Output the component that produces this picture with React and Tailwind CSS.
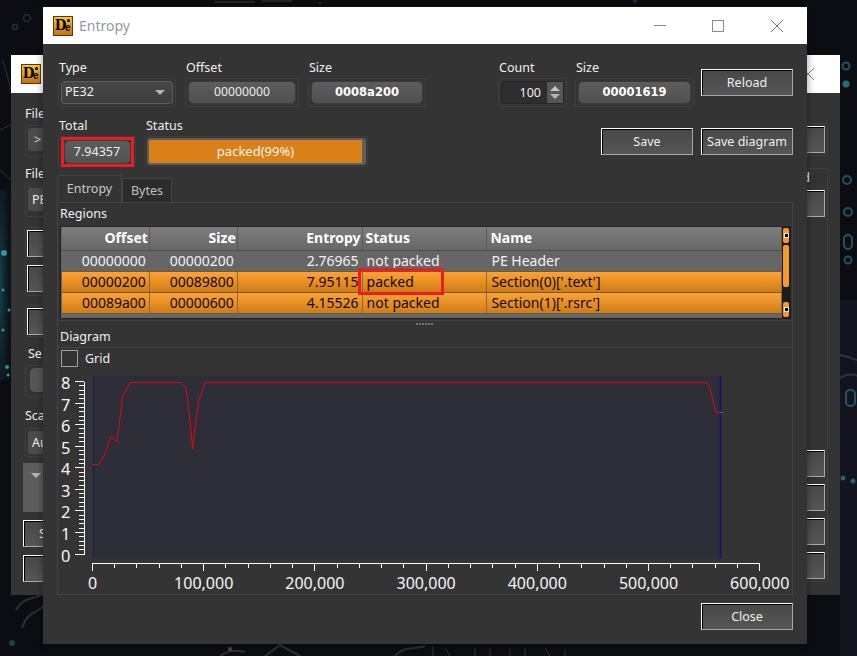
import React from "react";

const Logo = ({ className = "" }) => (
  <div className={`relative w-5 h-5 border border-[#5a3a08] bg-gradient-to-b from-[#f7c62c] to-[#c8700f] overflow-hidden shrink-0 ${className}`}>
    <span className="absolute left-[1px] top-[-2px] font-['Liberation_Serif',serif] font-bold text-[16px] leading-[20px] text-black">D</span>
    <span className="absolute left-[11px] top-[5px] font-['Liberation_Sans',sans-serif] font-bold text-[10px] leading-[12px] text-black">e</span>
    <span className="absolute left-[13px] top-[2px] w-[3px] h-[3px] rounded-full bg-black" />
  </div>
);

const Btn = ({ children, className = "" }) => (
  <div className={`flex items-center justify-center pt-[1px] h-[27px] border border-t-white border-l-white border-r-[#a8a8a8] border-b-[#a8a8a8] bg-gradient-to-b from-[#484848] to-[#565656] shadow-[inset_1px_1px_0_#000] text-[12.5px] text-[#eeeeee] ${className}`}>
    {children}
  </div>
);

const Label = ({ children, className = "" }) => (
  <div className={`h-[18px] leading-[16px] text-[12.5px] text-[#f0f0f0] ${className}`}>{children}</div>
);

const Frame = ({ children, className = "" }) => (
  <div className={`h-[29px] border border-[#3f3f3f] rounded-[2px] p-[2px] ${className}`}>{children}</div>
);

const Field = ({ children, bold, size = "text-[12.5px]" }) => (
  <div className={`h-full rounded-[5px] border border-[#3c3c3c] bg-gradient-to-b from-[#5c5c5c] to-[#515151] flex items-center justify-center ${bold ? "font-['DejaVu_Sans',sans-serif] font-bold text-[11.5px] text-white" : `${size} text-[#ececec]`}`}>
    {children}
  </div>
);

const Tri = ({ className = "" }) => (
  <div className={`w-0 h-0 border-l-[5px] border-r-[5px] border-t-[5px] border-l-transparent border-r-transparent border-t-[#b5b5b5] ${className}`} />
);

const Group = ({ children, className = "" }) => (
  <div className={`border border-[#3f3f3f] rounded-[2px] ${className}`}>{children}</div>
);

const cols = ["w-[88px]", "w-[88px]", "w-[125px]", "w-[125px]", "w-[295px]"];

const HeaderRow = () => {
  const labels = ["Offset", "Size", "Entropy", "Status", "Name"];
  return (
    <div className="flex h-[24px] bg-gradient-to-b from-[#7d7d7d] to-[#686868] border-b border-[#4c4c4c] font-bold text-[14px] text-white">
      {labels.map((l, i) => (
        <div key={l} className={`${cols[i]} pb-[2px] border-r border-[#5a5a5a] flex items-center ${i < 3 ? "justify-end pr-[1px]" : "pl-[3px]"}`}>
          {l}
        </div>
      ))}
    </div>
  );
};

const Row = ({ values, orange, h = "h-[21px]" }) => (
  <div className={`flex ${h} text-[14px] ${orange ? "bg-gradient-to-b from-[#ffa232] to-[#cd7d17] text-[#140a00]" : "bg-[#666666] text-[#f2f2f2]"} border-b border-[#6e5a3c]`}>
    {values.map((v, i) => (
      <div key={i} className={`${cols[i]} pb-[2px] border-r ${orange ? "border-[#8a6a3a]" : "border-[#666666]"} flex items-center whitespace-nowrap ${i < 3 ? "justify-end pr-[3px]" : i === 3 ? "pl-[4px]" : "pl-[4px]"}`}>
        {v}
      </div>
    ))}
  </div>
);

const ScrollBar = () => (
  <div className="w-[9px] h-full bg-[#1c1c1c] flex flex-col items-center py-[1px] border-x border-[#1c1c1c]">
    <div className="w-full h-[15px] rounded-[2px] bg-[#f49a2c] flex items-center justify-center">
      <div className="w-[3px] h-[3px] bg-black outline outline-1 outline-[#f5e3c5]" />
    </div>
    <div className="w-full h-[42px] mt-[2px] rounded-[2px] bg-[#f49a2c]" />
    <div className="flex-1" />
    <div className="w-full h-[15px] rounded-[2px] bg-[#f49a2c] flex items-center justify-center">
      <div className="w-[3px] h-[3px] bg-black outline outline-1 outline-[#f5e3c5]" />
    </div>
  </div>
);

const curve = [
  [127, 286.5], [145, 286.5], [165, 255], [183, 202], [201, 218], [218, 82], [240, 40.5],
  [392, 40.5], [408, 57], [418, 135], [428, 240], [436, 170], [446, 95], [466, 40.5],
]
  .map(([x, y]) => `${(50 + x / 3).toFixed(1)},${(370 + y / 3).toFixed(1)}`)
  .join(" ");

const Chart = () => {
  const y0 = 555;
  const yU = 21.56;
  const x0 = 92.5;
  const xU = 111.2;
  const yTicks = [];
  for (let i = 0; i <= 40; i++) {
    const y = y0 - (i / 5) * yU;
    yTicks.push(<line key={i} x1={i % 5 === 0 ? 75 : 79} x2="84" y1={y} y2={y} stroke="#fff" strokeWidth="1" shapeRendering="crispEdges" />);
  }
  const xTicks = [];
  for (let i = 0; i <= 30; i++) {
    const x = x0 + (i / 5) * xU;
    xTicks.push(<line key={i} x1={x} x2={x} y1="564" y2={i % 5 === 0 ? 572 : 569} stroke="#fff" strokeWidth="1" shapeRendering="crispEdges" />);
  }
  return (
    <svg width="734" height="226" viewBox="58 368 734 226" className="block">
      <rect x="93" y="377" width="628" height="183" fill="#2e2e38" />
      <line x1="93.5" x2="93.5" y1="377" y2="560" stroke="#1c1c5a" strokeWidth="1" />
      <line x1="720.5" x2="720.5" y1="377" y2="560" stroke="#15156e" strokeWidth="2" />
      <polyline fill="none" stroke="#f2060f" strokeWidth="0.9" points={`${curve} 705,383.5 709,385.7 716,413.5 720,413.5`} />
      <line x1="720" x2="723" y1="413.5" y2="413.5" stroke="#8a5a5a" strokeWidth="1" />
      <line x1="84" x2="84" y1="382.5" y2="555.5" stroke="#fff" strokeWidth="1" shapeRendering="crispEdges" />
      {yTicks}
      <line x1="92" x2="760" y1="564" y2="564" stroke="#fff" strokeWidth="1" shapeRendering="crispEdges" />
      {xTicks}
      {[0, 1, 2, 3, 4, 5, 6, 7, 8].map((n) => (
        <text key={n} x="61" y={y0 - n * yU + 7.5} fontSize="16.5" fill="#f4f4f4" fontFamily="'Noto Sans', sans-serif">{n}</text>
      ))}
      {["0", "100,000", "200,000", "300,000", "400,000", "500,000", "600,000"].map((t, i) => (
        <text key={t} x={x0 + i * xU} y="590" textAnchor="middle" fontSize="16" fill="#f4f4f4" fontFamily="'Noto Sans', sans-serif">{t}</text>
      ))}
    </svg>
  );
};

const Backdrop = () => (
  <svg width="857" height="656" className="absolute inset-0">
    <defs>
      <radialGradient id="glow" cx="0" cy="0.5" r="1">
        <stop offset="0" stopColor="#1f6f78" stopOpacity="0.55" />
        <stop offset="1" stopColor="#0b1a22" stopOpacity="0" />
      </radialGradient>
    </defs>
    <rect width="857" height="656" fill="#0c0d12" />
    <rect x="0" y="190" width="14" height="190" fill="url(#glow)" />
    <rect x="840" y="300" width="17" height="356" fill="#14141f" />
    <g fill="#2e97a3">
      <circle cx="4" cy="253" r="3" /><circle cx="3" cy="290" r="1.5" /><circle cx="7" cy="367" r="2" /><circle cx="8" cy="375" r="1.5" />
      <circle cx="3" cy="330" r="1.5" /><circle cx="9" cy="310" r="1.5" />
      <circle cx="12" cy="643" r="3" opacity="0.4" />
      <circle cx="846" cy="84" r="3.5" opacity="0.7" /><circle cx="843" cy="478" r="2.5" opacity="0.6" />
      <circle cx="853" cy="481" r="2.5" opacity="0.6" />
    </g>
    <g fill="none" stroke="#2e8f9c" strokeWidth="2" opacity="0.55">
      <circle cx="846" cy="66" r="3.5" />
      <circle cx="847" cy="180" r="4" />
      <circle cx="848" cy="212" r="4" />
      <rect x="844" y="235" width="8" height="14" rx="4" />
      <circle cx="848" cy="260" r="3.5" />
      <rect x="846" y="390" width="9" height="16" rx="4" />
    </g>
    <g fill="none" stroke="#6b7077" strokeWidth="2" opacity="0.35">
      <path d="M840 355 Q850 357 857 360" />
      <path d="M840 378 Q850 372 857 376" />
      <path d="M16 610 C25 595 35 600 42 594" />
      <path d="M22 628 C28 610 36 615 43 606" />
      <path d="M395 656 C405 645 415 650 425 646" />
      <path d="M265 656 L280 645 L300 656" />
      <path d="M220 656 Q230 648 245 652" />
    </g>
    <g fill="none" stroke="#2e7f8c" strokeWidth="1" opacity="0.4">
      <path d="M0 130 L11 125" /><path d="M0 170 L11 180" /><path d="M3 60 L11 90" />
      <path d="M433 646 V656" /><path d="M445 648 L450 656" /><path d="M475 648 V656" /><path d="M490 648 V656" />
      <path d="M510 648 V656" /><path d="M525 648 V656" /><path d="M545 648 L550 656" /><path d="M565 650 V656" />
    </g>
    <circle cx="230" cy="649" r="2" fill="#5f8f9c" opacity="0.5" />
    <g fill="#5d6165" opacity="0.3">
      <rect x="215" y="1" width="40" height="2" />
      <rect x="262" y="0" width="30" height="2" />
      <circle cx="320" cy="3" r="1.5" /><circle cx="635" cy="1" r="2" fill="#2e8f9c" />
    </g>
    <g fill="none" stroke="#1f4f5a" strokeWidth="1.5" opacity="0.6">
      <circle cx="27" cy="18" r="3.5" /><circle cx="15" cy="27" r="2.5" /><circle cx="805" cy="12" r="2" />
    </g>
  </svg>
);

const BackWindow = () => (
  <div className="absolute left-[11px] top-[55px] w-[829px] h-[540px] bg-[#343434] flex flex-col">
    <div className="h-[38px] bg-white flex items-center justify-between pl-[10px] pr-[25px] shrink-0">
      <Logo />
      <svg width="14" height="14" viewBox="0 0 14 14"><path d="M1 1L13 13M13 1L1 13" stroke="#888" fill="none" /></svg>
    </div>
    <div className="flex justify-between flex-1">
      <div className="w-[200px] pl-[14px] flex flex-col">
        <Label className="mt-[13px]">File</Label>
        <Group className="mt-[1px] h-[32px] w-[90px] p-[2px]"><div className="h-[23px] rounded-[3px] bg-[#4c4c4c] pl-[6px] text-[12.5px] leading-[23px] text-[#ddd]">&gt;</div></Group>
        <Label className="mt-[9px]">File</Label>
        <Group className="mt-[1px] h-[32px] w-[90px] p-[2px]"><div className="h-[23px] rounded-[3px] bg-[#4c4c4c] pl-[4px] text-[12.5px] leading-[23px] text-[#eee]">PE</div></Group>
        <Group className="mt-[10px] w-[90px] h-[69px] pl-[1px] pt-[2px] flex flex-col gap-[8px]"><Btn className="w-[80px]" /><Btn className="w-[80px]" /></Group>
        <Group className="mt-[9px] w-[90px] h-[32px] pl-[1px] pt-[2px]"><Btn className="w-[80px]" /></Group>
        <Label className="mt-[9px] pl-[3px]">Se</Label>
        <Group className="mt-[1px] w-[90px] h-[32px] pl-[4px] pt-[2px]"><div className="h-[24px] rounded-[5px] bg-[#565656]" /></Group>
        <Label className="mt-[11px]">Scan</Label>
        <Group className="mt-[2px] w-[90px] h-[29px] p-[2px]"><div className="h-[23px] rounded-[3px] bg-[#4c4c4c] pl-[4px] text-[12.5px] leading-[23px] text-[#eee]">Au</div></Group>
        <div className="mt-[6px] ml-[-2px] w-[90px] h-[49px] bg-[#5d5d5d] pt-[10px] pl-[8px]"><Tri /></div>
        <Btn className="mt-[8px] ml-[-2px] w-[90px] !justify-start pl-[15px]">S</Btn>
        <Btn className="mt-[8px] ml-[-2px] w-[90px]" />
      </div>
      <div className="w-[100px] relative flex flex-col items-end pr-[13px]">
        <Group className="mt-[30px] w-[60px] h-[33px] p-[2px] mr-[-1px] flex justify-end"><Btn className="w-[40px]" /></Group>
        <div className="flex-1 w-[60px] mt-[12px] mr-[-1px] mb-[13px] border border-[#3f3f3f] rounded-[2px] flex flex-col items-end pr-[2px]">
          <div className="h-[18px] w-full text-right pr-[15px] text-[12.5px] text-[#eee] leading-[18px]">Ord</div>
          <Btn className="mt-[3px] w-[40px]" />
          <div className="flex-1" />
          <div className="flex flex-col gap-[7px] w-[40px]">
            <Btn /><Btn /><Btn /><Btn />
          </div>
          <div className="h-[2px]" />
        </div>
      </div>
    </div>
  </div>
);

const Tabs = () => (
  <div className="flex items-end h-[27px] ml-0">
    <div className="w-[65px] h-[27px] border border-b-0 border-[#444] rounded-t-[2px] bg-[#343434] flex items-center justify-center text-[12.5px] text-[#c8c8c8]">Entropy</div>
    <div className="w-[50px] h-[24px] pt-[1px] border border-b-0 border-[#444] bg-[#2c2c2c] flex items-center justify-center text-[12.5px] text-[#c0c0c0]">Bytes</div>
  </div>
);

const RegionsTable = () => (
  <div className="relative ml-[2px] mt-[3px] w-[731px] h-[93px] border border-[#222] border-t-[#262626] flex bg-[#666] p-0 pl-[1px]">
    <div className="w-[720px] flex flex-col">
      <HeaderRow />
      <Row values={["00000000", "00000200", "2.76965", "not packed", "PE Header"]} />
      <Row orange values={["00000200", "00089800", "7.95115", "packed", "Section(0)['.text']"]} />
      <Row orange values={["00089a00", "00000600", "4.15526", "not packed", "Section(1)['.rsrc']"]} />
    </div>
    <ScrollBar />
    <div className="absolute left-[297px] top-[41px] w-[86px] h-[27px] border-[3px] border-[#ed1c24]" />
  </div>
);

export default function App() {
  return (
    <div className="relative w-[857px] h-[656px] overflow-hidden font-['Noto_Sans',sans-serif] bg-[#0c0d12]">
      <Backdrop />
      <BackWindow />
      <div className="absolute left-[43px] top-[6px] w-[764px] h-[638px] bg-[#343434] border-t border-[#111] shadow-[0_0_8px_rgba(0,0,0,0.4)] flex flex-col">
        <div className="h-[37px] bg-white flex items-center pl-[10px] shrink-0">
          <Logo />
          <div className="ml-[6px] text-[14px] text-[#929aa6]">Entropy</div>
          <div className="flex-1" />
          <div className="w-[12px] h-px bg-[#8a8a8a] mr-[46px]" />
          <div className="w-[12px] h-[12px] border border-[#8a8a8a] mr-[46px]" />
          <svg width="14" height="14" viewBox="0 0 14 14" className="mr-[23px]"><path d="M1 1L13 13M13 1L1 13" stroke="#777" fill="none" /></svg>
        </div>

        <div className="flex flex-col flex-1 pl-[14px] pr-[14px]">
          <div className="flex mt-[16px] h-[47px] pl-[1px]">
            <div className="w-[118px]">
              <Label className="pl-[1px]">Type</Label>
              <Frame>
                <div className="h-full flex items-center justify-between pl-[3px] pr-[7px] rounded-[3px] border border-[#5c5c5c] bg-gradient-to-b from-[#474747] to-[#3e3e3e] text-[12.5px] text-[#eee]">
                  PE32 <Tri />
                </div>
              </Frame>
            </div>
            <div className="w-[114px] ml-[9px]">
              <Label className="pl-[1px]">Offset</Label>
              <Frame><Field size="text-[12.2px]">00000000</Field></Frame>
            </div>
            <div className="w-[118px] ml-[9px]">
              <Label className="pl-[1px]">Size</Label>
              <Frame><Field bold>0008a200</Field></Frame>
            </div>
            <div className="w-[69px] ml-[72px]">
              <Label className="pl-[1px]">Count</Label>
              <Frame>
                <div className="h-full flex rounded-[3px] border border-[#262626] bg-[#2e2e2e]">
                  <div className="flex-1 text-right pr-[6px] text-[12.5px] leading-[21px] text-[#eee]">100</div>
                  <div className="w-[16px] bg-[#565656] flex flex-col items-center justify-center gap-[3px]">
                    <div className="w-0 h-0 border-l-[5px] border-r-[5px] border-b-[5px] border-l-transparent border-r-transparent border-b-[#c4c4c4]" />
                    <Tri />
                  </div>
                </div>
              </Frame>
            </div>
            <div className="w-[119px] ml-[8px]">
              <Label className="pl-[1px]">Size</Label>
              <Frame><Field bold>00001619</Field></Frame>
            </div>
            <Btn className="w-[92px] ml-[7px] mt-[9px]">Reload</Btn>
          </div>

          <div className="flex mt-[11px] h-[49px] pl-[1px]">
            <div className="w-[78px]">
              <Label className="pl-[1px]">Total</Label>
              <Frame className="!h-[31px] !p-0 pl-[2px] flex items-center justify-center">
                <div className="w-[73px] h-[30px] border-[3px] border-[#ed1c24] mt-[1px]">
                  <Field>7.94357</Field>
                </div>
              </Frame>
            </div>
            <div className="w-[223px] ml-[9px]">
              <Label className="pl-[1px]">Status</Label>
              <Frame className="!h-[31px] !p-[1px]">
                <div className="h-full border-2 border-[#5e5e5e] border-r-[4px] rounded-[3px] bg-[#d98019] flex items-center justify-center text-[13px] text-[#f3f3f3]">
                  packed(99%)
                </div>
              </Frame>
            </div>
            <div className="flex-1" />
            <Btn className="w-[92px] mt-[10px]">Save</Btn>
            <Btn className="w-[92px] ml-[8px] mt-[10px]">Save diagram</Btn>
          </div>

          <div className="mt-[8px]">
            <Tabs />
          </div>

          <div className="h-[393px] border border-[#444] flex flex-col">
            <div className="h-[118px] pl-0 border-b border-[#444] flex flex-col">
              <div className="h-[18px] mt-[2px] pl-[2px] text-[12.5px] leading-[18px] text-[#f0f0f0]">Regions</div>
              <RegionsTable />
            </div>
            <div className="h-[26px] flex justify-center pt-[2px]">
              <div className="flex gap-[1px] h-[2px] mr-[1px]">
                {[0, 1, 2, 3, 4, 5].map((i) => <div key={i} className="w-[2px] h-[2px] bg-[#777]" />)}
              </div>
              <div className="absolute left-[17px] mt-[5px] text-[12.5px] leading-[18px] text-[#f0f0f0]">Diagram</div>
            </div>
            <div className="flex-1 border-t border-[#444] relative">
              <div className="absolute left-[3px] top-[1px] flex items-center gap-[7px] text-[12.5px] text-[#eee]">
                <div className="w-[17px] h-[17px] border border-[#a0a0a0] bg-[#333]" />
                <span className="pt-[1px]">Grid</span>
              </div>
              <div className="pt-[19px]">
                <Chart />
              </div>
            </div>
          </div>

          <div className="flex justify-end mt-[8px]">
            <Btn className="w-[92px]">Close</Btn>
          </div>
        </div>
      </div>
    </div>
  );
}
